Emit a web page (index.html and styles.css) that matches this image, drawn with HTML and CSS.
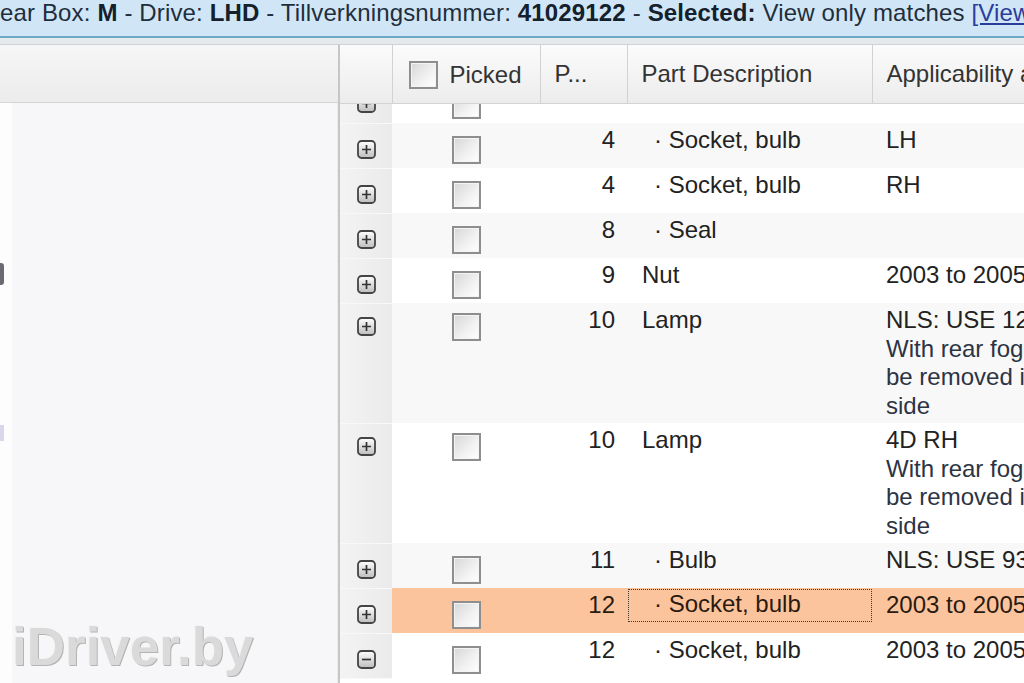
FILE: index.html
```html
<!DOCTYPE html>
<html>
<head>
<meta charset="utf-8">
<link rel="stylesheet" href="styles.css">
</head>
<body>
<div class="topbar">ear Box: <b>M</b> - Drive: <b>LHD</b> - Tillverkningsnummer: <b>41029122</b> - <b>Selected:</b> View only matches <a href="#" class="link">[View all]</a></div>
<div class="band"></div>
<div class="main">
  <div class="left">
    <div class="left-head"></div>
    <div class="left-body">
      <div class="strip"><span class="frag"></span><span class="frag2"></span></div>
      <div class="left-fill"></div>
    </div>
  </div>
  <div class="grid">
    <table class="tbl head">
      <colgroup><col class="c-exp"><col class="c-pick"><col class="c-pos"><col class="c-desc"><col class="c-app"></colgroup>
      <tr>
        <th class="h-exp"></th>
        <th class="h-pick"><span class="cb hcb"></span><span class="htxt">Picked</span></th>
        <th>P...</th>
        <th>Part Description</th>
        <th>Applicability and Notes</th>
      </tr>
    </table>
    <div class="body-wrap">
      <table class="tbl body">
        <colgroup><col class="c-exp"><col class="c-pick"><col class="c-pos"><col class="c-desc"><col class="c-app"></colgroup>
        <tr>
          <td class="exp"><svg class="ico" viewBox="0 0 19 19"><defs><linearGradient id="g" x1="0" y1="0" x2="0" y2="1"><stop offset="0" stop-color="#ffffff"/><stop offset="1" stop-color="#bdbdbd"/></linearGradient></defs><rect x="1" y="1" width="17" height="17" rx="3.5" fill="url(#g)" stroke="#444" stroke-width="1.8"/><path d="M5 9.5h9M9.5 5v9" stroke="#333" stroke-width="1.7"/></svg></td>
          <td class="pick"><span class="cb"></span></td>
          <td class="pos"></td>
          <td class="desc"></td>
          <td class="app"></td>
        </tr>
        <tr class="alt">
          <td class="exp"><svg class="ico" viewBox="0 0 19 19"><rect x="1" y="1" width="17" height="17" rx="3.5" fill="url(#g)" stroke="#444" stroke-width="1.8"/><path d="M5 9.5h9M9.5 5v9" stroke="#333" stroke-width="1.7"/></svg></td>
          <td class="pick"><span class="cb"></span></td>
          <td class="pos">4</td>
          <td class="desc child">· Socket, bulb</td>
          <td class="app">LH</td>
        </tr>
        <tr>
          <td class="exp"><svg class="ico" viewBox="0 0 19 19"><rect x="1" y="1" width="17" height="17" rx="3.5" fill="url(#g)" stroke="#444" stroke-width="1.8"/><path d="M5 9.5h9M9.5 5v9" stroke="#333" stroke-width="1.7"/></svg></td>
          <td class="pick"><span class="cb"></span></td>
          <td class="pos">4</td>
          <td class="desc child">· Socket, bulb</td>
          <td class="app">RH</td>
        </tr>
        <tr class="alt">
          <td class="exp"><svg class="ico" viewBox="0 0 19 19"><rect x="1" y="1" width="17" height="17" rx="3.5" fill="url(#g)" stroke="#444" stroke-width="1.8"/><path d="M5 9.5h9M9.5 5v9" stroke="#333" stroke-width="1.7"/></svg></td>
          <td class="pick"><span class="cb"></span></td>
          <td class="pos">8</td>
          <td class="desc child">· Seal</td>
          <td class="app"></td>
        </tr>
        <tr>
          <td class="exp"><svg class="ico" viewBox="0 0 19 19"><rect x="1" y="1" width="17" height="17" rx="3.5" fill="url(#g)" stroke="#444" stroke-width="1.8"/><path d="M5 9.5h9M9.5 5v9" stroke="#333" stroke-width="1.7"/></svg></td>
          <td class="pick"><span class="cb"></span></td>
          <td class="pos">9</td>
          <td class="desc">Nut</td>
          <td class="app">2003 to 2005</td>
        </tr>
        <tr class="alt">
          <td class="exp multi"><svg class="ico" viewBox="0 0 19 19"><rect x="1" y="1" width="17" height="17" rx="3.5" fill="url(#g)" stroke="#444" stroke-width="1.8"/><path d="M5 9.5h9M9.5 5v9" stroke="#333" stroke-width="1.7"/></svg></td>
          <td class="pick multi"><span class="cb"></span></td>
          <td class="pos">10</td>
          <td class="desc">Lamp</td>
          <td class="app">NLS: USE 12 78 456<br><span class="note">With rear fog lamp. Must</span><br><span class="note">be removed if fitted on left</span><br><span class="note">side</span></td>
        </tr>
        <tr>
          <td class="exp multi"><svg class="ico" viewBox="0 0 19 19"><rect x="1" y="1" width="17" height="17" rx="3.5" fill="url(#g)" stroke="#444" stroke-width="1.8"/><path d="M5 9.5h9M9.5 5v9" stroke="#333" stroke-width="1.7"/></svg></td>
          <td class="pick multi"><span class="cb"></span></td>
          <td class="pos">10</td>
          <td class="desc">Lamp</td>
          <td class="app">4D RH<br><span class="note">With rear fog lamp. Must</span><br><span class="note">be removed if fitted on left</span><br><span class="note">side</span></td>
        </tr>
        <tr class="alt">
          <td class="exp"><svg class="ico" viewBox="0 0 19 19"><rect x="1" y="1" width="17" height="17" rx="3.5" fill="url(#g)" stroke="#444" stroke-width="1.8"/><path d="M5 9.5h9M9.5 5v9" stroke="#333" stroke-width="1.7"/></svg></td>
          <td class="pick"><span class="cb"></span></td>
          <td class="pos">11</td>
          <td class="desc child">· Bulb</td>
          <td class="app">NLS: USE 93 41 205</td>
        </tr>
        <tr class="hl">
          <td class="exp"><svg class="ico" viewBox="0 0 19 19"><rect x="1" y="1" width="17" height="17" rx="3.5" fill="url(#g)" stroke="#444" stroke-width="1.8"/><path d="M5 9.5h9M9.5 5v9" stroke="#333" stroke-width="1.7"/></svg></td>
          <td class="pick"><span class="cb"></span></td>
          <td class="pos">12</td>
          <td class="desc focus-cell"><div class="focus child">· Socket, bulb</div></td>
          <td class="app">2003 to 2005</td>
        </tr>
        <tr>
          <td class="exp"><svg class="ico" viewBox="0 0 19 19"><rect x="1" y="1" width="17" height="17" rx="3.5" fill="url(#g)" stroke="#444" stroke-width="1.8"/><path d="M5 9.5h9" stroke="#333" stroke-width="1.7"/></svg></td>
          <td class="pick"><span class="cb"></span></td>
          <td class="pos">12</td>
          <td class="desc child">· Socket, bulb</td>
          <td class="app">2003 to 2005</td>
        </tr>
      </table>
    </div>
  </div>
</div>
<div class="watermark">iDriver.by</div>
</body>
</html>
```
FILE: styles.css
```css
html, body {
  margin: 0;
  padding: 0;
  width: 1024px;
  height: 683px;
  overflow: hidden;
  font-family: "Liberation Sans", Arial, sans-serif;
  background: #ffffff;
}

.topbar {
  height: 36px;
  line-height: 26px;
  font-size: 24px;
  letter-spacing: 0.15px;
  color: #1f2e3c;
  background: #d0e6f6;
  border-bottom: 2px solid #6ea8c8;
  white-space: nowrap;
  overflow: hidden;
}
.topbar b { color: #14202c; }
.link { color: #2a3c9c; text-decoration: underline; }

.band {
  height: 6px;
  background: #e4e9ec;
  border-bottom: 1px solid #cdd3d6;
}

.main {
  display: flex;
  height: 638px;
  overflow: hidden;
}

.left {
  width: 338px;
  flex: none;
  border-right: 2px solid #c6c6c6;
  display: flex;
  flex-direction: column;
}
.left-head {
  height: 57px;
  background: linear-gradient(#f6f6f6, #ececec);
  border-bottom: 1px solid #d6d6d6;
}
.left-body {
  flex: 1;
  display: flex;
}
.strip {
  width: 12px;
  background: #fdfdfd;
  display: flex;
  flex-direction: column;
  padding-top: 160px;
}
.frag {
  display: block;
  width: 4px;
  height: 22px;
  background: #6a6a70;
  border-radius: 0 3px 3px 0;
}
.frag2 {
  display: block;
  width: 4px;
  height: 16px;
  margin-top: 140px;
  background: #d8d8ea;
}
.left-fill {
  flex: 1;
  background: #f7f7f9;
  border-right: 1px solid #ededed;
}

.grid {
  flex: 1;
  overflow: hidden;
  display: flex;
  flex-direction: column;
}

.tbl {
  border-collapse: collapse;
  table-layout: fixed;
  width: 832px;
  font-size: 24px;
}
.c-exp { width: 52px; }
.c-pick { width: 148px; }
.c-pos { width: 87px; }
.c-desc { width: 245px; }
.c-app { width: 300px; }

.head th {
  height: 58px;
  padding: 0 0 0 14px;
  text-align: left;
  font-weight: normal;
  color: #333333;
  background: linear-gradient(#fbfbfb, #ececec);
  border-left: 1px solid #d2d2d2;
  border-bottom: 1px solid #d4d4d4;
  white-space: nowrap;
  overflow: hidden;
  vertical-align: middle;
}
.head th.h-exp { border-left: none; padding: 0; }
.head th.h-pick { padding-left: 16px; }
.h-pick .cb { display: inline-block; vertical-align: middle; margin: 0 12px 0 0; }
.htxt { vertical-align: middle; }

.body-wrap {
  flex: 1;
  overflow: hidden;
}
.body {
  margin-top: -26px;
}
.body td {
  vertical-align: top;
  padding: 3px 12px 3px 14px;
  line-height: 28.5px;
  color: #222222;
  white-space: nowrap;
  overflow: hidden;
  background: #ffffff;
}
.body tr.alt td { background: #f8f8f8; }
.body tr.hl td { background: #fcc49c; color: #2a1a10; }

.body td.exp {
  padding: 16px 0 0 0;
  text-align: center;
  background: linear-gradient(to right, #f3f3f3, #eaeaea);
  border-bottom: 1px solid #f8f8f8;
}
.body tr.alt td.exp, .body tr.hl td.exp { background: linear-gradient(to right, #f3f3f3, #eaeaea); }
.body td.exp.multi { padding-top: 13px; }
.ico { width: 19px; height: 19px; display: block; margin: 0 auto; }

.body td.pick {
  padding: 13px 0 4px 0;
  line-height: 0;
}
.body td.pick.multi { padding-top: 10px; }
.cb {
  display: block;
  margin: 0 auto;
  width: 25px;
  height: 24px;
  border: 2px solid #8e8e8e;
  background: linear-gradient(135deg, #d6d6d6, #f2f2f2 60%, #ffffff);
  box-shadow: inset 0 0 0 1px #f4f4f4;
}

.body td.pos {
  text-align: right;
  padding-right: 12px;
}
.body td.desc { padding-left: 15px; }
.child { padding-left: 12px; }
.body td.desc.child { padding-left: 27px; }
.body td.focus-cell { padding: 1px 0 0 1px; }
.focus {
  border: 1px dotted #3a3a3a;
  height: 31px;
  line-height: 28px;
  padding-left: 25px;
}
.body td.app { padding-left: 14px; }
.note { color: #2c3444; }

.watermark {
  position: absolute;
  left: 12px;
  top: 616px;
  font-size: 53px;
  font-weight: bold;
  color: #dadada;
  letter-spacing: 0;
  text-shadow: 1px 1px 0 #b4b4b4, -1px -1px 0 #f4f4f4;
}
```
